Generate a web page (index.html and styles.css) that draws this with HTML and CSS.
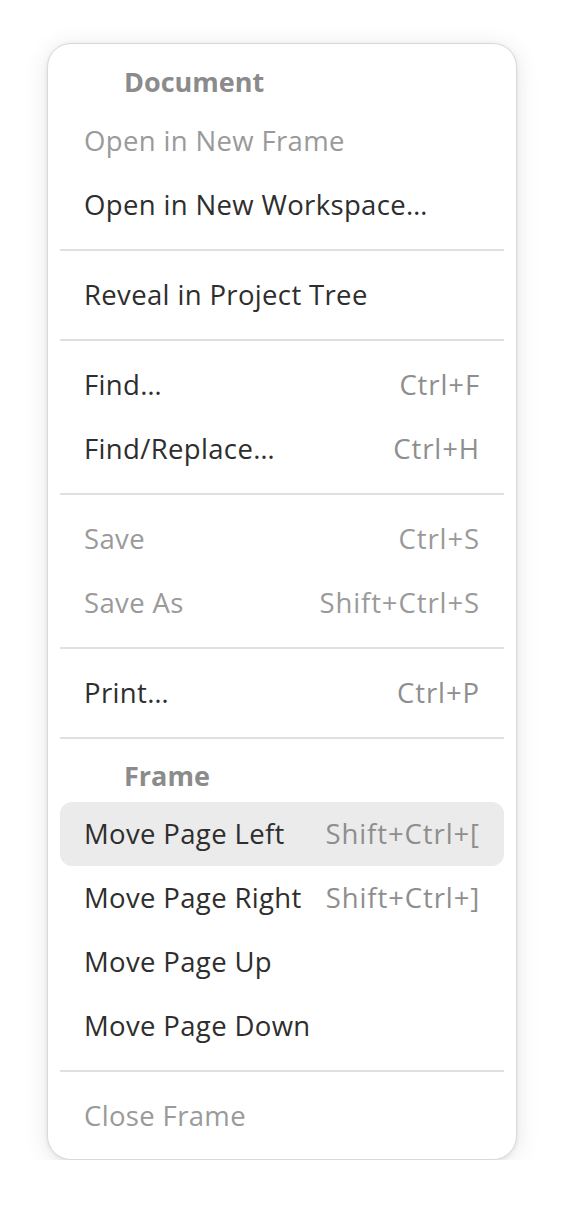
FILE: index.html
```html
<!DOCTYPE html>
<html>
<head>
<meta charset="utf-8">
<link rel="stylesheet" href="styles.css">
</head>
<body>
<div class="page">
  <div class="popover">
    <div class="header">Document</div>
    <div class="item disabled"><span class="label">Open in New Frame</span></div>
    <div class="item"><span class="label">Open in New Workspace…</span></div>
    <div class="sep"></div>
    <div class="item"><span class="label">Reveal in Project Tree</span></div>
    <div class="sep"></div>
    <div class="item"><span class="label">Find…</span><span class="accel">Ctrl+F</span></div>
    <div class="item"><span class="label">Find/Replace…</span><span class="accel">Ctrl+H</span></div>
    <div class="sep"></div>
    <div class="item disabled"><span class="label">Save</span><span class="accel">Ctrl+S</span></div>
    <div class="item disabled"><span class="label">Save As</span><span class="accel">Shift+Ctrl+S</span></div>
    <div class="sep"></div>
    <div class="item"><span class="label">Print…</span><span class="accel">Ctrl+P</span></div>
    <div class="sep"></div>
    <div class="header header-frame">Frame</div>
    <div class="item hover"><span class="label">Move Page Left</span><span class="accel">Shift+Ctrl+[</span></div>
    <div class="item"><span class="label">Move Page Right</span><span class="accel">Shift+Ctrl+]</span></div>
    <div class="item"><span class="label">Move Page Up</span></div>
    <div class="item"><span class="label">Move Page Down</span></div>
    <div class="sep"></div>
    <div class="item disabled"><span class="label">Close Frame</span></div>
  </div>
</div>
</body>
</html>
```
FILE: styles.css
```css
html, body {
  margin: 0;
  padding: 0;
  background: #ffffff;
}
body {
  font-family: "Open Sans", "Noto Sans", sans-serif;
  font-size: 27.5px;
  color: #2e2e2e;
}
.page {
  padding: 43px 0 0 47px;
}
.popover {
  box-sizing: border-box;
  width: 470px;
  background: #ffffff;
  border: 1px solid #d9d9d9;
  border-radius: 24px;
  box-shadow: 0 4px 24px rgba(0, 0, 0, 0.10), 0 1px 4px rgba(0, 0, 0, 0.08);
  padding: 13px 12px 11px 12px;
  display: flex;
  flex-direction: column;
}
.header {
  box-sizing: border-box;
  height: 52px;
  display: flex;
  align-items: center;
  padding: 0 0 3px 64px;
  font-weight: 700;
  font-size: 27px;
  color: #8b8b8b;
}
.header-frame {
  height: 51px;
}
.item {
  box-sizing: border-box;
  height: 64px;
  display: flex;
  align-items: center;
  justify-content: space-between;
  padding: 0 24px 1px 24px;
  border-radius: 12px;
  white-space: nowrap;
}
.label {
  letter-spacing: 0.35px;
}
.item.hover {
  background: #ebebeb;
}
.item.disabled {
  color: #9a9a9a;
}
.accel {
  color: #8e8e8e;
  margin-left: 24px;
  letter-spacing: 0.9px;
}
.item.disabled .accel {
  color: #9a9a9a;
}
.sep {
  height: 2px;
  background: #e0e0e0;
  margin: 12px 0 12px 0;
}
```
